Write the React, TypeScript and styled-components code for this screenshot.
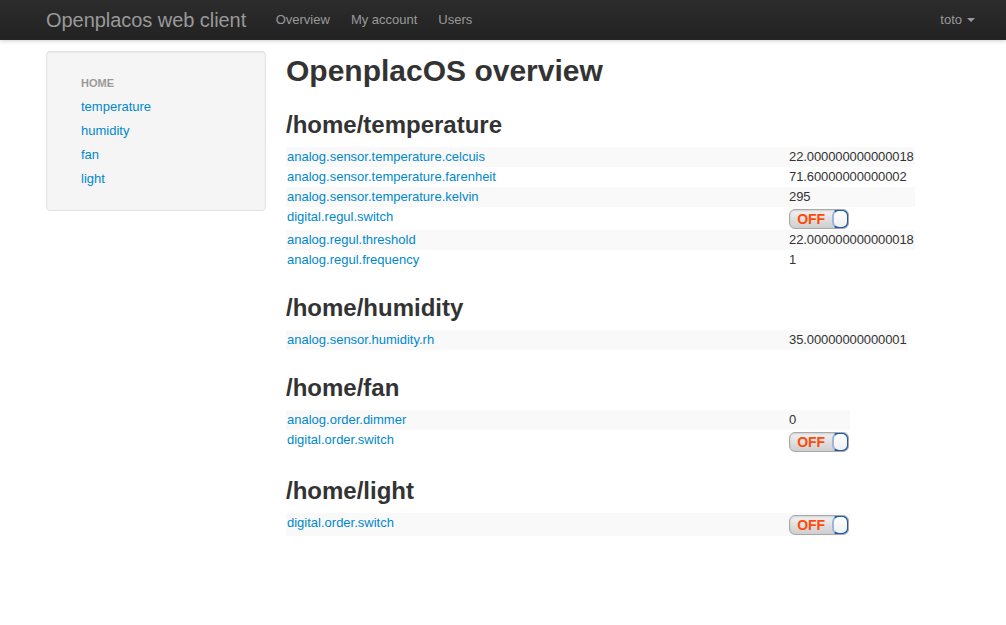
import React from "react";
import styled, { createGlobalStyle } from "styled-components";

const GlobalStyle = createGlobalStyle`
  html, body { margin: 0; padding: 0; background: #fff; }
  body {
    font-family: "Liberation Sans", Arial, Helvetica, sans-serif;
    font-size: 13px;
    line-height: 18px;
    color: #333;
  }
  * { box-sizing: border-box; }
`;

const Navbar = styled.header`
  height: 40px;
  display: flex;
  align-items: center;
  padding: 0 21px 0 46px;
  background: linear-gradient(#2c2c2c, #222);
  border-bottom: 1px solid #252525;
  box-shadow: 0 1px 4px rgba(0, 0, 0, 0.2);
`;

const Brand = styled.a`
  font-size: 20px;
  line-height: 40px;
  color: #999;
  padding-right: 19px;
  text-decoration: none;
  letter-spacing: -0.05px;
`;

const NavList = styled.nav`
  display: flex;
  flex: 1;
`;

const NavLink = styled.a`
  color: #999;
  font-size: 13px;
  line-height: 40px;
  padding: 0 10.5px;
  text-decoration: none;
`;

const UserMenu = styled.a`
  display: flex;
  align-items: center;
  gap: 5px;
  color: #999;
  font-size: 13px;
  line-height: 40px;
  padding: 0 10px;
  text-decoration: none;
`;

const Caret = styled.span`
  width: 0;
  height: 0;
  border-left: 4px solid transparent;
  border-right: 4px solid transparent;
  border-top: 4px solid #999;
  margin-top: 1px;
`;

const Container = styled.div`
  display: flex;
  align-items: flex-start;
  gap: 20px;
  padding: 11px 0 0 46px;
`;

const Well = styled.aside`
  width: 220px;
  flex: none;
  background: #f5f5f5;
  border: 1px solid #e3e3e3;
  border-radius: 4px;
  box-shadow: inset 0 1px 1px rgba(0, 0, 0, 0.05);
  padding: 19px 0 19px 34px;
`;

const NavHeader = styled.div`
  font-size: 11px;
  font-weight: bold;
  line-height: 24px;
  color: #999;
  text-transform: uppercase;
  text-shadow: 0 1px 0 rgba(255, 255, 255, 0.5);
`;

const SideLink = styled.a`
  display: block;
  font-size: 13px;
  line-height: 24px;
  color: #0088cc;
  text-decoration: none;
`;

const Main = styled.main`
  flex: 1;
`;

const Title = styled.h1`
  font-size: 30px;
  line-height: 40px;
  font-weight: bold;
  margin: 0 0 19px;
  color: #333;
`;

const SectionTitle = styled.h2`
  font-size: 24px;
  line-height: 30px;
  font-weight: bold;
  margin: 0 0 7px;
  color: #333;
`;

const Table = styled.table`
  border-collapse: collapse;
  margin-bottom: 23px;
  tbody tr:nth-child(odd) td { background: #f9f9f9; }
`;

const NameCell = styled.td`
  width: 502px;
  padding: 1px;
  vertical-align: top;
  line-height: 18px;
`;

const ValueCell = styled.td`
  padding: 1px;
  vertical-align: top;
  line-height: 18px;
  white-space: nowrap;
  letter-spacing: -0.1px;
`;

const Link = styled.a`
  color: #0088cc;
  text-decoration: none;
`;

const Toggle = styled.span`
  display: flex;
  width: 60px;
  height: 20px;
  margin-top: 1px;
  border-radius: 6px;
  border: 1px solid #a9a9a9;
  background: linear-gradient(#f4f4f4, #dcdcdc 60%, #cfcfcf);
  box-shadow: inset 0 1px 2px rgba(0, 0, 0, 0.15);
  overflow: hidden;
`;

const ToggleLabel = styled.span`
  flex: 1;
  display: flex;
  align-items: center;
  justify-content: center;
  font-size: 14px;
  font-weight: bold;
  line-height: 18px;
  color: #ff4a0a;
`;

const Knob = styled.span`
  width: 17px;
  height: 20px;
  margin: -1px -1px -1px 0;
  border-radius: 7px;
  background: linear-gradient(#ffffff, #f0f0f0);
  border: 2px solid #1f5aa6;
  border-left-color: #9db5d6;
`;

type Row = { name: string; value?: string; toggle?: boolean };
type Section = { title: string; rows: Row[] };

const sections: Section[] = [
  {
    title: "/home/temperature",
    rows: [
      { name: "analog.sensor.temperature.celcuis", value: "22.000000000000018" },
      { name: "analog.sensor.temperature.farenheit", value: "71.60000000000002" },
      { name: "analog.sensor.temperature.kelvin", value: "295" },
      { name: "digital.regul.switch", toggle: true },
      { name: "analog.regul.threshold", value: "22.000000000000018" },
      { name: "analog.regul.frequency", value: "1" },
    ],
  },
  {
    title: "/home/humidity",
    rows: [{ name: "analog.sensor.humidity.rh", value: "35.00000000000001" }],
  },
  {
    title: "/home/fan",
    rows: [
      { name: "analog.order.dimmer", value: "0" },
      { name: "digital.order.switch", toggle: true },
    ],
  },
  {
    title: "/home/light",
    rows: [{ name: "digital.order.switch", toggle: true }],
  },
];

export default function App() {
  return (
    <>
      <GlobalStyle />
      <Navbar>
        <Brand href="#">Openplacos web client</Brand>
        <NavList>
          <NavLink href="#">Overview</NavLink>
          <NavLink href="#">My account</NavLink>
          <NavLink href="#">Users</NavLink>
        </NavList>
        <UserMenu href="#">
          toto <Caret />
        </UserMenu>
      </Navbar>
      <Container>
        <Well>
          <NavHeader>Home</NavHeader>
          <SideLink href="#">temperature</SideLink>
          <SideLink href="#">humidity</SideLink>
          <SideLink href="#">fan</SideLink>
          <SideLink href="#">light</SideLink>
        </Well>
        <Main>
          <Title>OpenplacOS overview</Title>
          {sections.map((s) => (
            <section key={s.title}>
              <SectionTitle>{s.title}</SectionTitle>
              <Table>
                <tbody>
                  {s.rows.map((r, i) => (
                    <tr key={i}>
                      <NameCell>
                        <Link href="#">{r.name}</Link>
                      </NameCell>
                      <ValueCell>
                        {r.toggle ? (
                          <Toggle>
                            <ToggleLabel>OFF</ToggleLabel>
                            <Knob />
                          </Toggle>
                        ) : (
                          r.value
                        )}
                      </ValueCell>
                    </tr>
                  ))}
                </tbody>
              </Table>
            </section>
          ))}
        </Main>
      </Container>
    </>
  );
}
